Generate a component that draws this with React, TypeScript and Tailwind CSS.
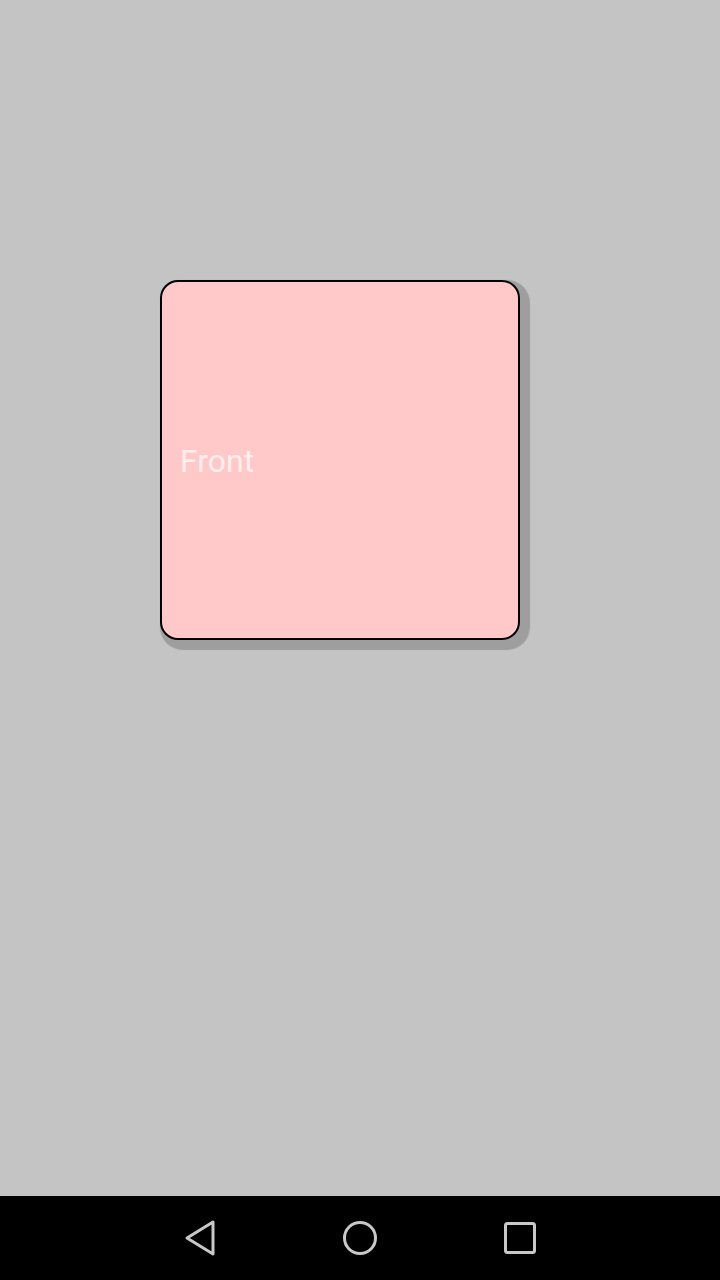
import React from 'react';

const NavBar: React.FC = () => (
  <div className="h-[84px] bg-black flex items-center justify-center gap-[116px]">
    <svg width="44" height="44" viewBox="0 0 44 44" fill="none" stroke="#c8c8c8" strokeWidth="3" strokeLinejoin="round">
      <path d="M35 6 L9 22 L35 38 Z" />
    </svg>
    <svg width="44" height="44" viewBox="0 0 44 44" fill="none" stroke="#c8c8c8" strokeWidth="3">
      <circle cx="22" cy="22" r="15.5" />
    </svg>
    <svg width="44" height="44" viewBox="0 0 44 44" fill="none" stroke="#c8c8c8" strokeWidth="3">
      <rect x="7.5" y="7.5" width="29" height="29" rx="2" />
    </svg>
  </div>
);

export default function App() {
  return (
    <div className="w-[720px] h-[1280px] flex flex-col bg-[#c4c4c4]" style={{ fontFamily: 'Roboto, "Noto Sans", sans-serif' }}>
      <div className="flex-1 pt-[280px] pl-[160px]">
        <div className="w-[360px] h-[360px] rounded-[18px] border-2 border-black bg-[#ffc9c9] shadow-[5px_5px_1px_5px_#9e9e9e] flex items-center pl-[18px]">
          <span className="text-[32px] text-white/70 leading-none pt-[2px]">Front</span>
        </div>
      </div>
      <NavBar />
    </div>
  );
}
